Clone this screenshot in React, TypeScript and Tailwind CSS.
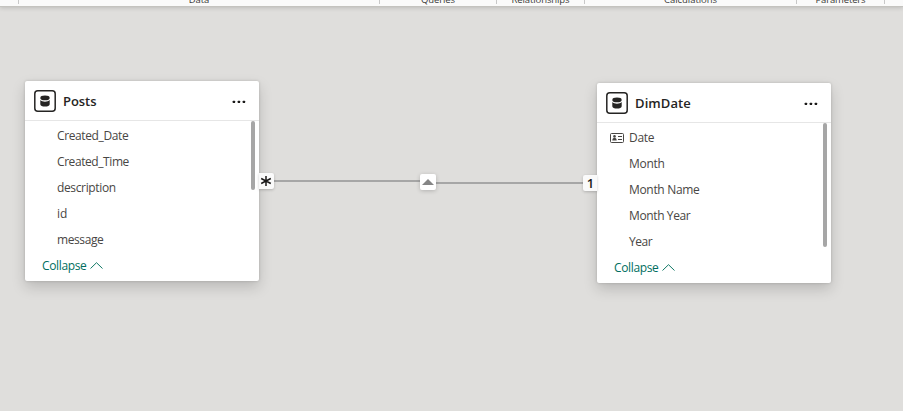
import type { ReactNode } from 'react';

const groups = [
  { label: '', width: 'w-[19px]', tracking: '' },
  { label: 'Data', width: 'w-[361px]', tracking: 'tracking-[-0.1px]' },
  { label: 'Queries', width: 'w-[117px]', tracking: 'tracking-[-0.1px]' },
  { label: 'Relationships', width: 'w-[88px]', tracking: 'tracking-[-0.1px]' },
  { label: 'Calculations', width: 'w-[212px]', tracking: 'tracking-[-0.05px]' },
  { label: 'Parameters', width: 'w-[88px]', tracking: 'tracking-[-0.15px]' },
];

function Ribbon() {
  return (
    <header className="relative z-10 flex h-[6px] w-full bg-[#fafafa] shadow-[0_1px_0_#c4c3bf,0_2px_4px_rgba(0,0,0,0.16)]">
      {groups.map((g) => (
        <div key={g.label} className={`flex h-[4px] shrink-0 items-end justify-center border-r border-[#c8c8c8] ${g.width}`}>
          <span className={`block h-[12px] whitespace-nowrap text-[9.5px] leading-[12px] text-[#3b3a39] translate-y-[2px] ${g.tracking}`}>{g.label}</span>
        </div>
      ))}
    </header>
  );
}

function DatabaseIcon() {
  return (
    <svg width="22" height="22" viewBox="0 0 22 22" className="shrink-0">
      <rect x="0.8" y="0.8" width="20.4" height="20.4" rx="3" fill="#fff" stroke="#252423" strokeWidth="1.5" />
      <ellipse cx="11" cy="7.900" rx="4.700" ry="2.400" fill="#252423" />
      <path d="M6.300 10.100c1 1.200 2.800 1.600 4.700 1.600s3.700-.4 4.700-1.600v4.100c0 1.400-2.100 2.400-4.700 2.400s-4.700-1-4.700-2.400z" fill="#252423" />
    </svg>
  );
}

function KeyIcon() {
  return (
    <svg width="14" height="10" viewBox="0 0 14 10" className="shrink-0">
      <rect x="0.5" y="0.5" width="13" height="9" rx="1" fill="none" stroke="#484644" />
      <circle cx="4.500" cy="3.400" r="1.300" fill="#484644" />
      <path d="M2.300 7.400c0-2 1-2.400 2.200-2.400s2.200.4 2.200 2.400z" fill="#484644" />
      <path d="M8 3.500h4M8 6.500h4" stroke="#484644" />
    </svg>
  );
}

type Field = { name: string; tracking: string; icon?: ReactNode };

function TableCard(props: { title: string; titleTracking: string; fields: Field[]; place: string; thumb: string }) {
  return (
    <section className={`absolute flex h-[200px] w-[234px] flex-col rounded-[2px] bg-white shadow-[0_6px_14px_rgba(0,0,0,0.17),0_0_3px_rgba(0,0,0,0.16)] ${props.place}`}>
      <div className="flex h-[40px] shrink-0 items-center border-b border-[#e6e6e6] pl-[9px] pr-[13px]">
        <DatabaseIcon />
        <h2 className={`ml-[7px] text-[13px] font-semibold leading-[18px] text-[#252423] ${props.titleTracking}`}>{props.title}</h2>
        <svg width="14" height="4" viewBox="0 0 14 4" className="ml-auto mt-[3px]" fill="#1b1a19">
          <rect x="0.700" y="0.700" width="2.400" height="2.400" rx="0.500" />
          <rect x="5.700" y="0.700" width="2.400" height="2.400" rx="0.500" />
          <rect x="10.700" y="0.700" width="2.400" height="2.400" rx="0.500" />
        </svg>
      </div>
      <div className="flex grow">
        <div className="flex grow flex-col pt-[2px]">
          {props.fields.map((f) => (
            <div key={f.name} className="flex h-[26px] items-center pl-[13px] text-[12px] text-[#484644]">
              <span className="flex w-[19px]">{f.icon}</span>
              <span className={`leading-[16px] ${f.tracking}`}>{f.name}</span>
            </div>
          ))}
          <button className="flex h-[26px] items-center pl-[17px] text-[12px] text-[#006e60]">
            <span className="leading-[16px] tracking-[-0.35px]">Collapse</span>
            <svg width="13" height="8" viewBox="0 0 13 8" className="ml-[3px]" fill="none" stroke="#117865" strokeWidth="1">
              <path d="M0.500 6.500L6.500 0.700l6 5.800" />
            </svg>
          </button>
        </div>
        <div className={`mr-[4px] w-[4px] rounded-full bg-[#a6a6a6] ${props.thumb}`} />
      </div>
    </section>
  );
}

export default function App() {
  return (
    <div className="flex h-[411px] w-[903px] flex-col overflow-hidden bg-[#dfdedc] font-['Open_Sans','Noto_Sans',sans-serif]">
      <Ribbon />
      <main className="relative grow">
        <svg className="absolute left-[259px] top-[164px]" width="338" height="24" viewBox="0 0 338 24" fill="none" stroke="#a6a6a6" strokeWidth="2">
          <path d="M15 11H169V13H325" />
        </svg>
        <TableCard
          title="Posts"
          titleTracking="tracking-[-0.05px]"
          place="left-[25px] top-[75px]"
          thumb="h-[69px]"
          fields={[
            { name: 'Created_Date', tracking: 'tracking-[-0.38px]' },
            { name: 'Created_Time', tracking: 'tracking-[-0.42px]' },
            { name: 'description', tracking: 'tracking-[-0.36px]' },
            { name: 'id', tracking: '' },
            { name: 'message', tracking: 'tracking-[-0.4px]' },
          ]}
        />
        <TableCard
          title="DimDate"
          titleTracking="tracking-[0.1px]"
          place="left-[597px] top-[77px]"
          thumb="h-[124px]"
          fields={[
            { name: 'Date', tracking: 'tracking-[-0.3px]', icon: <KeyIcon /> },
            { name: 'Month', tracking: 'tracking-[-0.3px]' },
            { name: 'Month Name', tracking: 'tracking-[-0.32px]' },
            { name: 'Month Year', tracking: 'tracking-[-0.38px]' },
            { name: 'Year', tracking: 'tracking-[-0.45px]' },
          ]}
        />
        <div className="absolute left-[259px] top-[167px] flex h-[16px] w-[15px] items-center justify-center rounded-r-[2px] bg-[#fafafa] pr-px shadow-[0_1px_3px_rgba(0,0,0,0.2)]">
          <svg width="12" height="12" viewBox="0 0 12 12" stroke="#1b1a19" strokeWidth="1.5">
            <path d="M6 1v10M1.200 3.500l9.600 5M10.800 3.500l-9.600 5" />
          </svg>
        </div>
        <div className="absolute left-[420px] top-[168px] flex h-[16px] w-[16px] items-center justify-center rounded-[2px] bg-white shadow-[0_1px_4px_rgba(0,0,0,0.2)]">
          <svg width="12" height="6" viewBox="0 0 12 6" fill="#858585">
            <path d="M0 6L6 0l6 6z" />
          </svg>
        </div>
        <div className="absolute left-[583px] top-[169px] flex h-[16px] w-[14px] items-center justify-center rounded-l-[2px] bg-[#fafafa] pl-px text-[13px] font-semibold leading-none text-[#1b1a19] shadow-[0_1px_3px_rgba(0,0,0,0.2)]">
          1
        </div>
      </main>
    </div>
  );
}
